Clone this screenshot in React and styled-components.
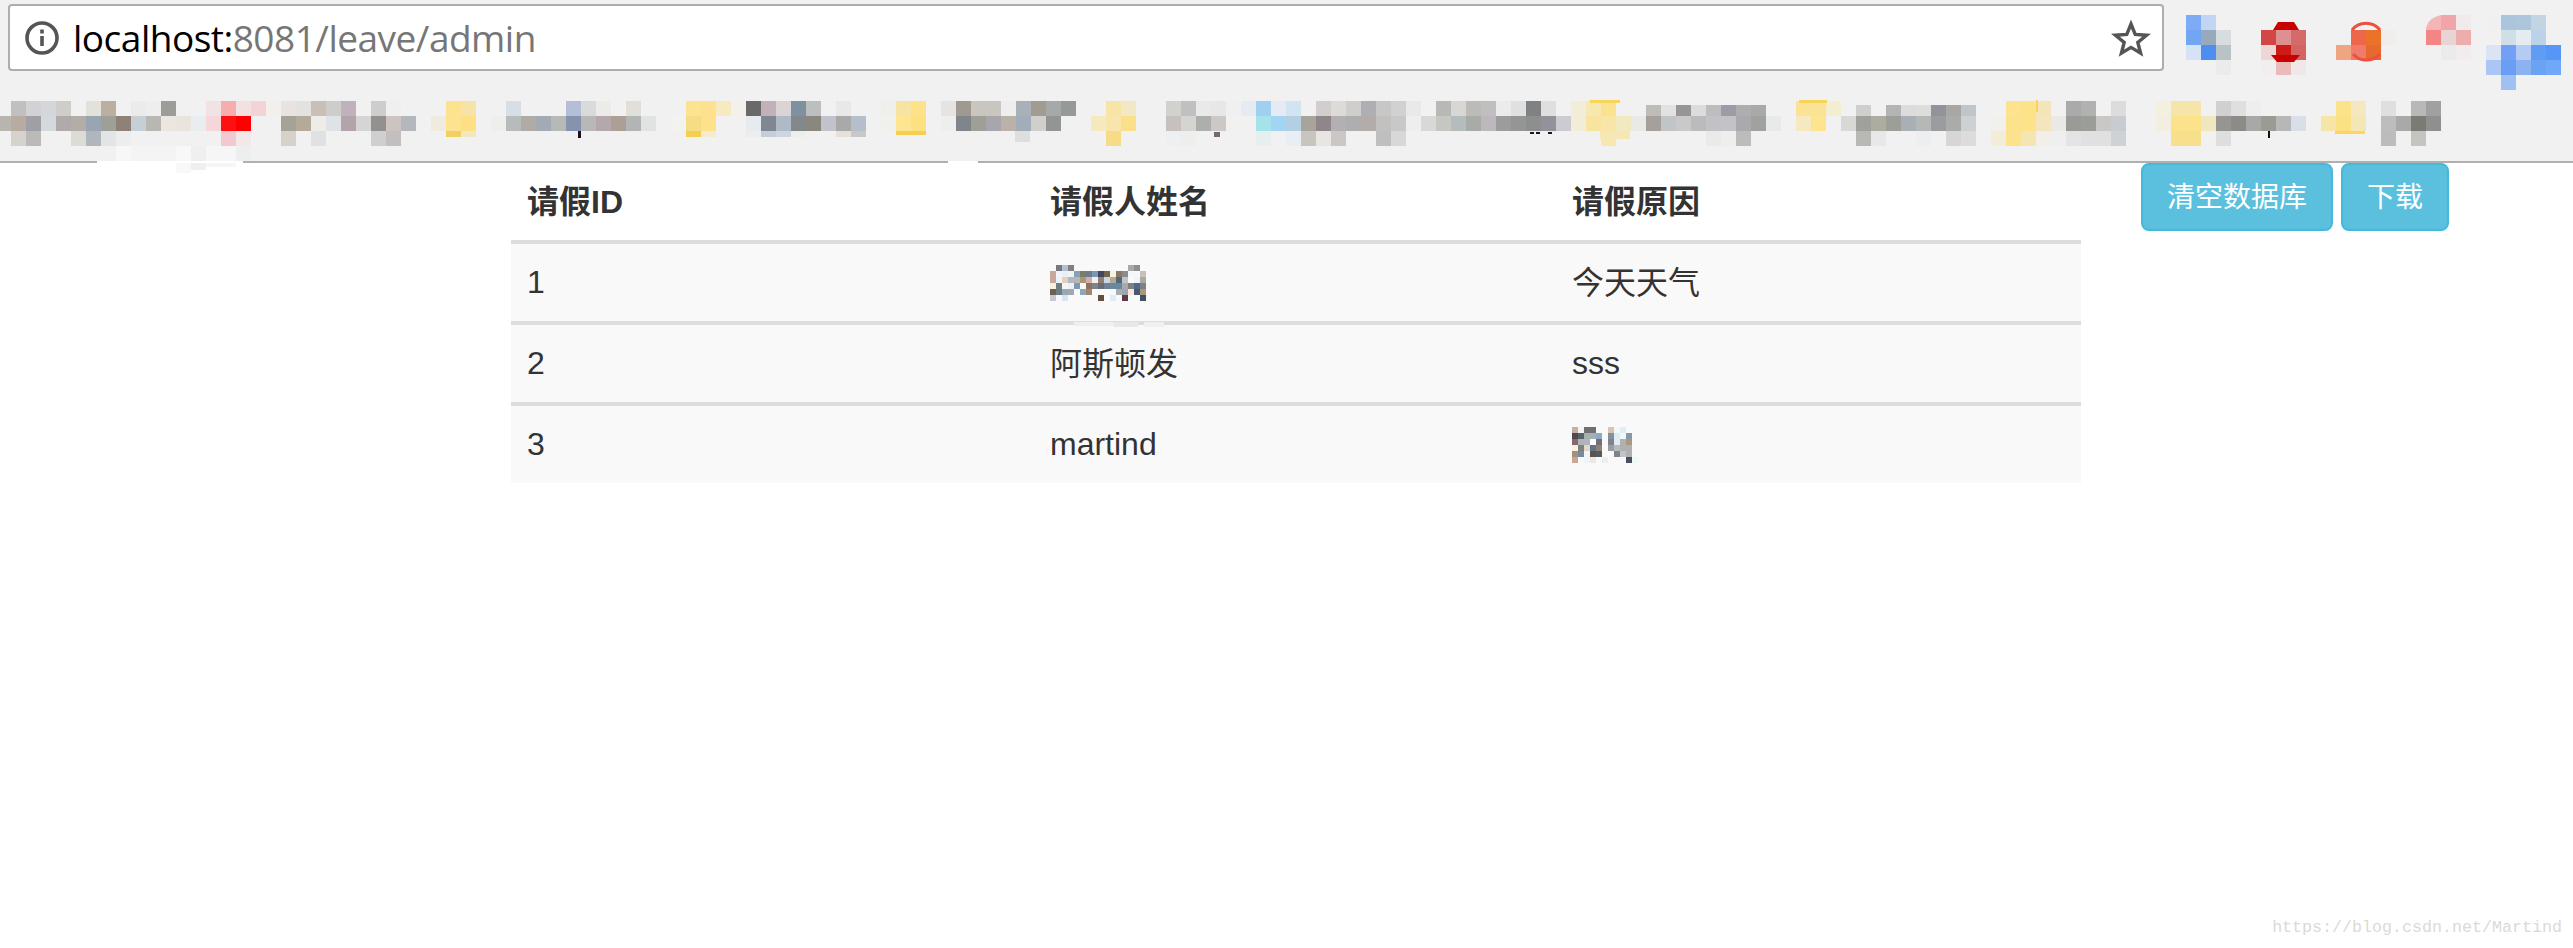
import React from 'react';
import styled, { createGlobalStyle } from 'styled-components';

const Global = createGlobalStyle`
  html, body { margin: 0; padding: 0; background: #fff; }
  #root { width: 2573px; height: 948px; overflow: hidden; }
`;

/* ---------- pixelated (censored) regions, as data ---------- */
const parse = (s) => {
  const out = [];
  let k = 0;
  s.trim().split(/\s+/).forEach((t) => {
    if (t[0] === '@') { k = Number(t.slice(1)); return; }
    out.push([k, t]);
    k += 1;
  });
  return out;
};

const Cells = ({ rows, x0, y0, w, h }) =>
  rows.flatMap((row, r) =>
    parse(row).map(([k, c]) => (
      <rect key={`${r}-${k}`} x={x0 + k * w} y={y0 + r * h} width={w} height={h} fill={`#${c}`} />
    ))
  );

const bookmarkRows = [
  `@0 c0c0c0 d2d2d6 d4d6d8 cfcdca @5 e2e1dc baafa0 @8 ecebea eeeeee 9e9c99 @13 f2e2e3 f5adad f3e1e2 f3d3d5 f2efec e8e3e0 e3e2e1 c8bfb7 cecdca bfb2bd
   @24 cdcdcd efefef @29 fde28f f7e3a8 @33 d8dee6 @37 b4bfd6 d9dadc ecebe8 @41 e2dfd8 @45 fde28f fde18e f7e9c0 f4f0ec 696969 c3b1b9 dbd4d4 7e919e bcbfbd
   @55 e8e8e8 @58 eff0ea f7e3a2 fde28a @62 e5e4e3 9f9991 c9c5bf c9c6c0 eeeeee a9b1b8 a29b92 a7a8aa 959a98 @73 f8e5a5 f3e8c5 @77 d2d2cc bfc0c2 e8e9e8 e6e7e8 f0f0f0 e6eaf2 a0d0f0 e6eaf4 d0e4f2
   @87 d2cece dcdbd8 cfcecd aeafb2 c8c7c7 d0d1d3 e9e9e9 @95 b8b8b6 d8d7d3 bdbbb9 bfbfbe ebebeb e0e0e0 7e8285 dfdfdf @104 f2edd8 f7e7b0 fce28f @109 bdbcb9 e2e3e1 979694 dcdcdc c0bbbd 9d9ca4 aeaeae a9a9a9
   @119 fbe395 fbe395 f4edd0 @123 cfcfcd @125 b4b4b4 dcdcda dcdedb 90939a a9a7a3 c0c5c9 @133 fde28f fde28a f4e5b8 @137 aaaaaa b0b2b0 @140 dcdcdc @143 f3f0e0 f6e5a8 f6e5a8 @147 d0d0d0 dfdfdf eeeeee @155 fde28c f5e8c0 @158 dfdfdf @160 b8b8b8 a0a0a0`,
  `@-1 b7b5ad b8aca0 9fa0a5 d3d9dc b0abaa b2aea7 9aa5b4 9e9f97 8d8178 c6ced6 b8b7b2 ebe6e0 e9e4de e9edf0 f5d7da ff1010 ff0000 @18 a5a297 b5a999 eeece7 dee3e8 b3a3aa d5d5d5 949090 cdc3c0 b4b8bc
   @28 f0ebe0 fde28f fce083 @32 eeeeec b7bbb9 b0aca5 a2aab3 b6b9b6 8692ae b8b8b8 b4a8ac ad9f95 b3b4b4 e1e2e4 @44 f2f2ef f8dc85 fde28a @49 e6ebef 818792 aebac8 83888b 89877f c1c2cc a9a9a9 b5bfc9
   @58 f0f0ec fde592 fde07f @62 eeeeec 80858c 9f9f98 a6a6ac bbb1a8 a2adb9 d0cfcb 929593 @72 f5e9c0 f8e5ab fbe08c @77 c6c1bc d4d4d2 adafad cbc8c5 @83 a6e2ea a2d4f4 b2d0e2 a8a39b 8f868b b3afb3 adaeaf b2ada8 c2c1c0 c8c8c8 eeeeee d8d8d8 c6c7c0 b5bcbd a8aca6 bdb8be 9c9c9c 959595 8d8e8e 93929a
   ccccd0 f2edd8 f8e3a0 f8e6a8 f3e9c0 e9e9e6 a6a09c c1c5c8 c9c9c9 bbbbbe c2c2c6 c3c3c7 a9a9ae a0a2a0 e8eaea @119 f6e8c0 fde48f @122 d8d8d6 a0a09c aeac9e 9c9f98 a8b0b6 b4b8b6 9a9ca0 a9aca9 ccd1d4
   @132 f2f0ea fde28c fde28a f3e6bf ebe9e6 9a9a96 9b9d98 c9c8c6 c8ccd0 @143 f2efe2 fde28c fde28c f0e6c0 969592 8c8b87 a9a8a8 9b9b94 b6b7b6 dadee6 @154 f5e6a8 fbe084 f5e6b5 @158 bdbdbd a9a9a9 7b7a75 8f8f8e`,
  `@0 d6d2ce bcb9b9 @4 dcdcd6 b0b6be e3e4e6 ecedee @14 f2c9ce f2e8e8 @18 d6d2ca @20 dfe1e3 @24 d0cfcf c2bfbe @86 c8c4bf e8e6e3 cbc7c4 @91 bfbfbf d8d8d8 @73 f7dc88 @77 eeeff2 eeeeea @83 e4efee @85 e8eef4
   @106 f9e8ae @113 eaeaea eeeeee bcbcbc @123 b8b8b5 e8e8e8 @127 edeef0 f1f1f2 d6d6d6 dcdcdc @132 f3ecd8 fde28d f4e6b4 f1efe8 efefef e4e4e4 e0e0e0 e0e0e0 ced2d6 @144 f8df8c f8df8c @147 dedede @158 bcbcbc @160 c4c4c0`,
];

/* partial cells and specks of the bookmark bar */
const bookmarkBits = [
  [116, 146, 15, 15, 'f7f7f7'], [131, 146, 45, 15, 'f4f4f4'], [176, 146, 15, 27, 'f8f8f8'], [191, 146, 15, 24, 'efefef'],
  [206, 146, 30, 21, 'f6f6f6'], [236, 146, 15, 15, 'eeeeee'], [97, 161, 146, 2, 'ffffff'], [948, 161, 30, 2, 'ffffff'],
  [446, 131, 15, 6, 'f0d060'], [461, 131, 15, 6, 'f1e8c0'], [578, 131, 3, 7, '1a1020'], [686, 131, 15, 6, 'f5d050'], [701, 131, 15, 6, 'f3ecd0'],
  [746, 131, 15, 6, 'ecedee'], [761, 131, 15, 6, 'c5ced8'], [776, 131, 15, 6, 'cdd5e0'], [791, 131, 15, 6, 'ecefec'],
  [836, 131, 15, 6, 'e6e0da'], [851, 131, 15, 6, 'c8c8c8'], [896, 131, 30, 4, 'f5cf50'], [1015, 131, 15, 11, 'dedede'],
  [1214, 132, 6, 5, '74696b'], [1530, 132, 4, 2, '101828'], [1536, 132, 4, 2, '101828'], [1548, 132, 4, 2, '101828'],
  [1646, 101, 120, 4, 'f1f1f1'], [1856, 101, 120, 4, 'f1f1f1'],
  [1590, 100, 30, 3, 'f7d45a'], [1799, 100, 28, 3, 'f7d45a'], [2036, 100, 2, 12, 'f7d45a'], [2335, 131, 30, 3, 'fcd75c'], [2268, 131, 2, 7, '101010'],
  [1600, 131, 30, 8, 'f5e8b5'],
];

const extGroups = [
  { x0: 2186, y0: 11, w: 15, rows: ['@0 7fabf4 c3d5f4', '@0 72a5f2 98a9bb d7dcdf', '@0 d6e2f5 4e8eee b9c2c6', '@2 ebebeb'] },
  { x0: 2261, y0: 26, w: 15, rows: ['@0 d34646 de8f8f d56a6a', '@0 ecd6d6 cc1a14 d46464', '@0 f2eeee ebbaba f0e8e8'] },
  { x0: 2336, y0: 26, w: 15, rows: ['@1 ee674b ea7229 f2eded', '@0 f0a582 ef7c6b e8692d'] },
  { x0: 2426, y0: 11, w: 15, rows: ['@0 f3b5b8 f0a6a8 f2eaea', '@0 f48585 e8d4d4 eeadad', '@1 ebebeb f2eded'] },
  { x0: 2486, y0: 11, w: 15, rows: ['@0 f0f0f2 abc5dc aec6dc c3d4e2', '@1 d0dee8 e4ecf2 bcd2e8', '@0 dbe4f4 72a0f4 b4ccf4 609cf4 5596f6', '@0 abc6f4 6a9ef4 8cb2f2 6aa2f4 6ea8f6', '@1 a0bff2'] },
];

const nameRows = [
  '@1 787878 b0c0d4 808080 @13 a9a9a9 8f8f8f',
  '@0 c8a898 f0f4f6 e8f0f4 f0f4f4 88a0b8 7c7c68 6c7c8c 7c98b0 404860 746450 f8f0e0 887868 8c8c8c f4f8fa f4f8fa c8c0b8',
  '@0 c8a898 e8f4f8 e4d0c0 b0b8c0 b8b4bc a89878 d0b0a8 f0f0f0 908070 c8d8e4 b8a890 506878 c4c4c8 f8fafc f0f4f8 a8a8a8',
  '@0 f8f0e0 707c80 f4f4f0 f0f0f4 7c98b4 f8f8f8 907060 808488 686c78 708090 6888a4 6888a0 a8a8b0 808080 50688c 808080',
  '@0 706050 707c84 98a8b8 a0a8b4 @5 88a8c0 a08870 @11 a8acb0 a0a4ac f8e8d8 485870 a89878',
  '@0 c8c8d4 @2 d8e4f0 @8 605040 @10 e0ecf4 @12 603848 @15 405068',
];

const reasonRows = [
  '@0 c8b0a0 f4f4f4 707070 707070 @6 d8c4b0 f0f8fa e0eef8',
  '@0 504a50 586068 a8b0b0 a0b0bc 90a8c0 @6 8090a0 e0ecf4 f0f8fc 8898a8',
  '@0 886868 b0b4b8 b0b4bc fcfcfc 707078 @6 808488 e0ecf4 b0b0b0 a89880',
  '@0 f8f0e0 808080 e0d8c8 607488 908070 @6 9c9ca0 b8bcc0 b0b0b0 b0b0b0',
  '@0 a89078 7888a0 f4f4f8 585450 585860 @7 808488 c0c4c8 b0b0b0',
  '@0 c8a890 @2 f0f4f8 f0e8e0 @5 eceef0 @9 485060 f0f8f4',
];

/* ---------- styled parts ---------- */
const Page = styled.div`
  position: relative;
  width: 2573px;
  height: 948px;
  background: #fff;
  font-family: "Liberation Sans", "Noto Sans CJK SC", sans-serif;
  color: #333;
`;

const Chrome = styled.header`
  height: 163px;
  box-sizing: border-box;
  background: #f1f1f1;
  border-bottom: 2px solid #b0b0b0;
`;

const TopRow = styled.div`
  display: flex;
  align-items: flex-start;
  height: 85px;
  padding: 4px 0 0 8px;
  box-sizing: border-box;
`;

const AddressBar = styled.div`
  display: flex;
  align-items: center;
  flex: none;
  width: 2156px;
  height: 67px;
  box-sizing: border-box;
  padding: 0 12px 0 15px;
  background: #fff;
  border: 2px solid #adadad;
  border-radius: 4px;
`;

const Url = styled.div`
  flex: 1;
  margin-left: 14px;
  font-family: "Open Sans", sans-serif;
  font-size: 37px;
  letter-spacing: -0.5px;
  line-height: 60px;
  white-space: nowrap;
  color: #767676;
`;

const Host = styled.span`
  color: #000;
`;

const MosaicSvg = styled.svg`
  display: block;
  flex: none;
  overflow: visible;
`;

const Main = styled.main`
  display: flex;
  align-items: flex-start;
  padding-left: 511px;
`;

const Table = styled.table`
  flex: none;
  width: 1570px;
  border-collapse: separate;
  border-spacing: 0;
  table-layout: fixed;
  font-size: 32px;
`;

const HeadCell = styled.th`
  width: ${(p) => p.$w}px;
  height: 72px;
  box-sizing: content-box;
  padding: 0 16px 5px;
  text-align: left;
  font-weight: 700;
  vertical-align: middle;
  border-bottom: 4px solid #ddd;
`;

const BodyRow = styled.tr`
  background: #f9f9f9;
  & + & td {
    border-top: 4px solid #ddd;
  }
`;

const Cell = styled.td`
  height: ${(p) => (p.$cjk ? 72 : 77)}px;
  box-sizing: content-box;
  padding: 0 16px ${(p) => (p.$cjk ? 5 : 0)}px;
  vertical-align: middle;
`;

const Actions = styled.div`
  display: flex;
  gap: 8px;
  margin-left: 60px;
`;

const ActionButton = styled.button`
  height: 68px;
  box-sizing: border-box;
  padding: 2px ${(p) => p.$pad}px 0;
  background: #5bc0de;
  border: 2px solid #46b8da;
  border-radius: 8px;
  color: #fff;
  font-family: "Liberation Sans", "Noto Sans CJK SC", sans-serif;
  font-size: 28px;
  line-height: 1;
`;

const Watermark = styled.div`
  position: absolute;
  right: 11px;
  top: 919px;
  font-family: "Liberation Mono", monospace;
  font-size: 16.67px;
  line-height: 18px;
  color: #dcdad5;
`;

/* ---------- icons ---------- */
const InfoIcon = () => (
  <MosaicSvg width="34" height="34" viewBox="0 0 34 34" fill="none" stroke="#555" strokeWidth="3.6">
    <circle cx="17" cy="17" r="15" />
    <path d="M17 15v10" />
    <path d="M17 8.5v4" />
  </MosaicSvg>
);

const StarIcon = () => (
  <MosaicSvg width="38" height="36" viewBox="0 0 38 36" fill="none" stroke="#555" strokeWidth="3.4" strokeLinejoin="miter">
    <path d="M19 4 L23.2 14.4 L34.6 15.2 L25.8 22.4 L28.6 33.2 L19 27.4 L9.4 33.2 L12.2 22.4 L3.4 15.2 L14.8 14.4 Z" />
  </MosaicSvg>
);

const Extensions = () => (
  <MosaicSvg width="409" height="85" viewBox="2164 0 409 85">
    {extGroups.map((g, i) => (
      <Cells key={i} rows={g.rows} x0={g.x0} y0={g.y0} w={g.w} h={g.w} />
    ))}
    <path d="M2273 26 L2278 18 H2294 L2299 26 Z" fill="#c90000" />
    <path d="M2271 51 L2277 58 H2294 L2300 51 Z" fill="#c90000" />
    <path d="M2352 26 A18 18 0 0 1 2380 26" fill="none" stroke="#ef4f3f" strokeWidth="3" />
    <path d="M2353 50 A18 18 0 0 0 2380 50" fill="none" stroke="#ef4f3f" strokeWidth="3" />
    <path d="M2426 11 V24 Q2428 14 2441 11 Z" fill="#f1f1f1" />
  </MosaicSvg>
);

const Bookmarks = () => (
  <MosaicSvg width="2573" height="76" viewBox="0 85 2573 76">
    <Cells rows={bookmarkRows} x0={11} y0={101} w={15} h={15} />
    {bookmarkBits.map(([x, y, w, h, c], i) => (
      <rect key={i} x={x} y={y} width={w} height={h} fill={`#${c}`} />
    ))}
  </MosaicSvg>
);

const NameMosaic = () => (
  <MosaicSvg width="96" height="36" viewBox="0 0 96 36">
    <Cells rows={nameRows} x0={0} y0={0} w={6} h={6} />
    <rect x="24" y="57" width="40" height="4" fill="#efefef" />
    <rect x="64" y="57" width="24" height="5" fill="#e8e8e8" />
    <rect x="94" y="57" width="20" height="5" fill="#f0f0f0" />
  </MosaicSvg>
);

const ReasonMosaic = () => (
  <MosaicSvg width="66" height="36" viewBox="0 0 66 36">
    <Cells rows={reasonRows} x0={0} y0={0} w={6} h={6} />
  </MosaicSvg>
);

export default function App() {
  return (
    <Page>
      <Global />
      <Chrome>
        <TopRow>
          <AddressBar>
            <InfoIcon />
            <Url>
              <Host>localhost:</Host>8081/leave/admin
            </Url>
            <StarIcon />
          </AddressBar>
          <Extensions />
        </TopRow>
        <Bookmarks />
      </Chrome>
      <Main>
        <Table>
          <thead>
            <tr>
              <HeadCell $w={491}>请假ID</HeadCell>
              <HeadCell $w={490}>请假人姓名</HeadCell>
              <HeadCell $w={493}>请假原因</HeadCell>
            </tr>
          </thead>
          <tbody>
            <BodyRow>
              <Cell>1</Cell>
              <Cell><NameMosaic /></Cell>
              <Cell $cjk>今天天气</Cell>
            </BodyRow>
            <BodyRow>
              <Cell>2</Cell>
              <Cell $cjk>阿斯顿发</Cell>
              <Cell>sss</Cell>
            </BodyRow>
            <BodyRow>
              <Cell>3</Cell>
              <Cell>martind</Cell>
              <Cell><ReasonMosaic /></Cell>
            </BodyRow>
          </tbody>
        </Table>
        <Actions>
          <ActionButton $pad={24}>清空数据库</ActionButton>
          <ActionButton $pad={24}>下载</ActionButton>
        </Actions>
      </Main>
      <Watermark>https://blog.csdn.net/Martind</Watermark>
    </Page>
  );
}
